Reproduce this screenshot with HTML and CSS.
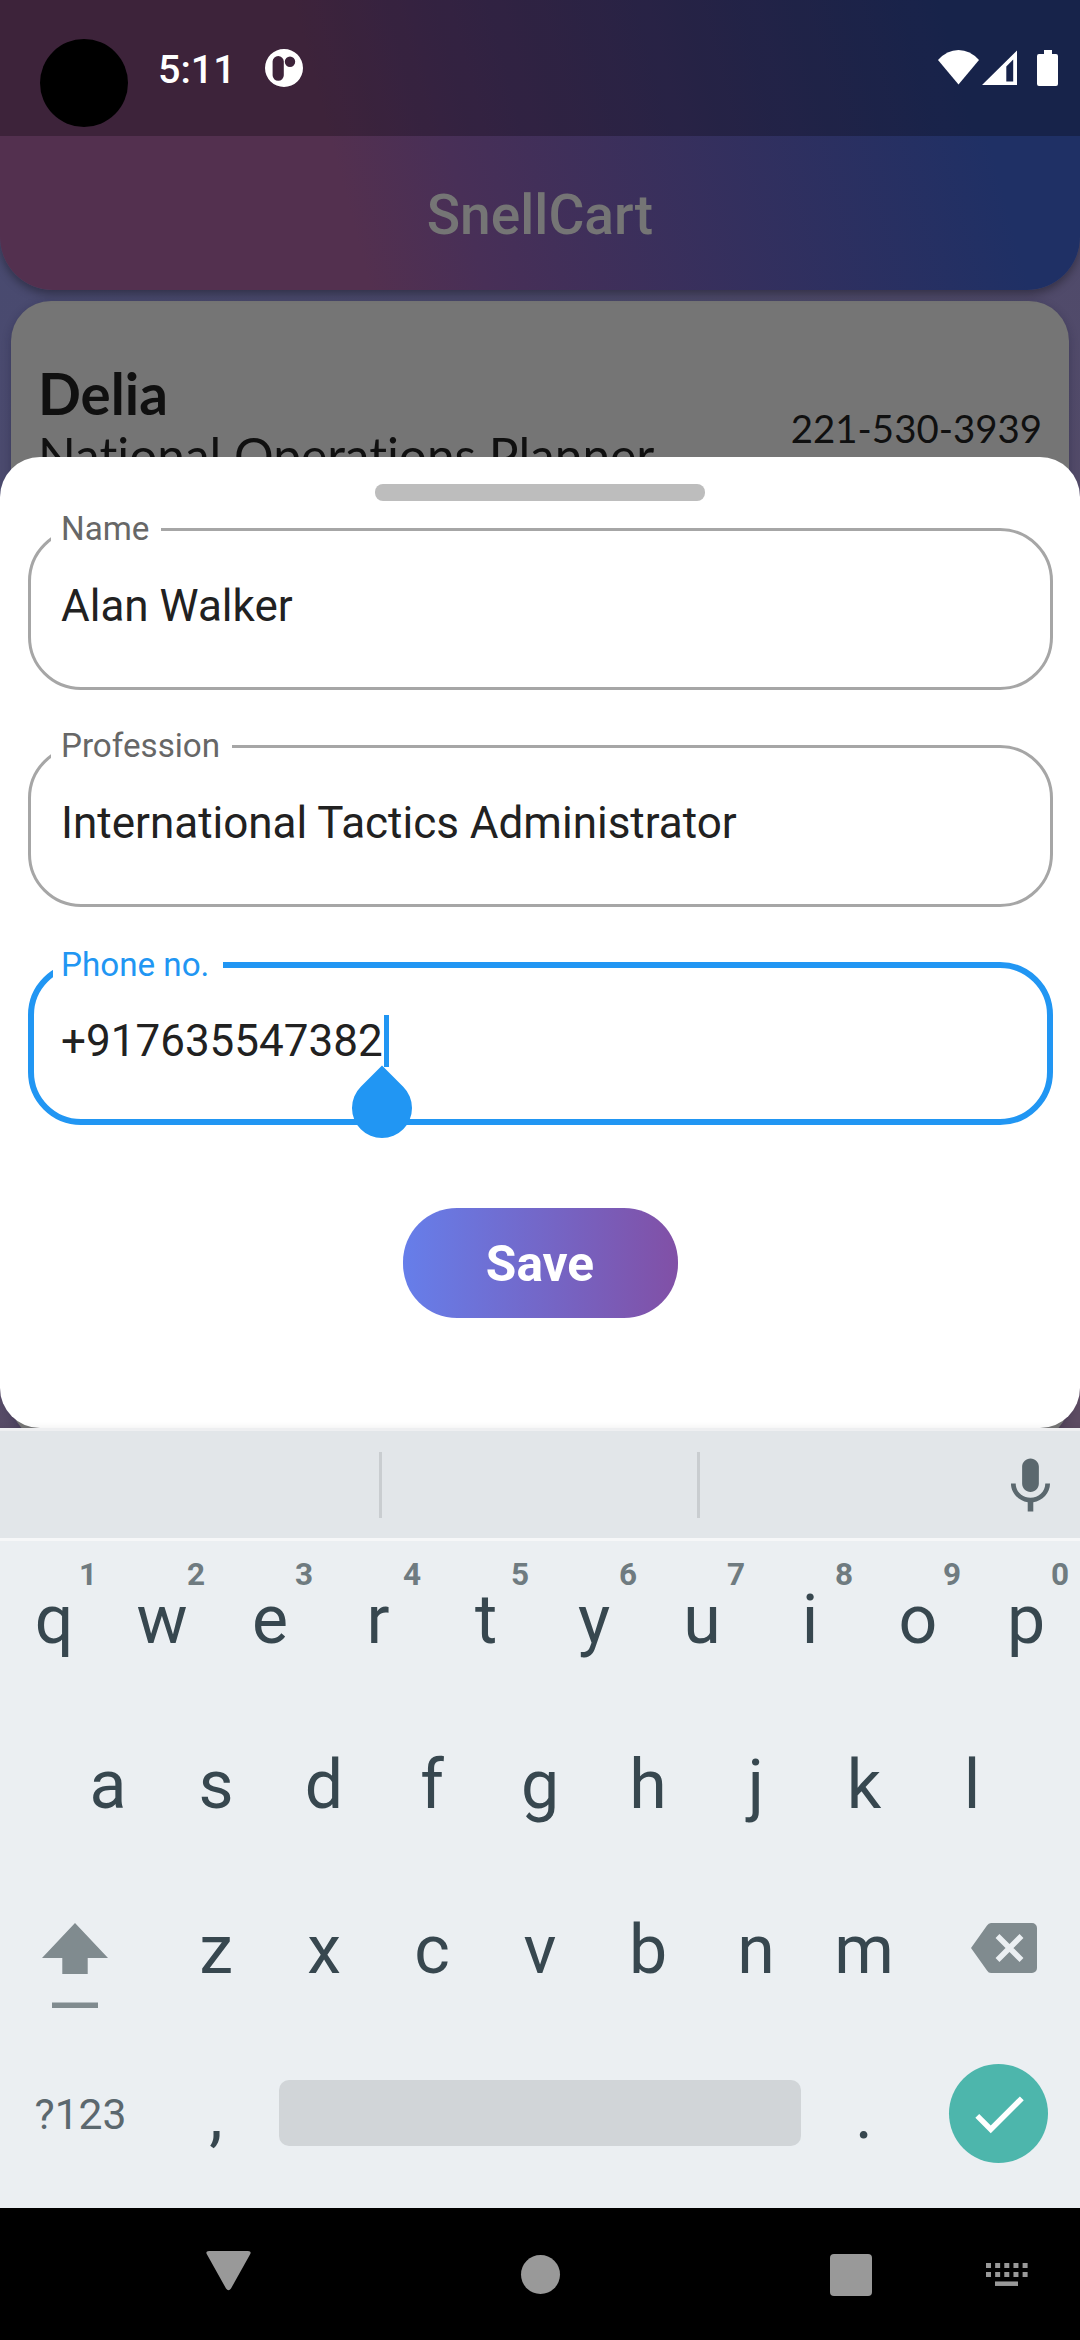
FILE: index.html
```html
<!DOCTYPE html>
<html lang="en">
<head>
<meta charset="utf-8">
<title>SnellCart</title>
<link rel="stylesheet" href="styles.css">
</head>
<body>
<div class="app">
  <header class="app-bar">
    <div class="status-bar">
      <span class="camera"></span>
      <span class="clock">5:11</span>
      <svg class="status-app" viewBox="0 0 38 38" width="38" height="38"><path fill="#fff" fill-rule="evenodd" d="M19 0a19 19 0 1 0 0 38a19 19 0 1 0 0-38zM13.2 7a5.6 5.6 0 0 1 5.6 5.6v13.6a5.6 5.6 0 0 1-11.2 0V12.600a5.600 5.600 0 0 1 5.600-5.600zM25 7.600a5.200 5.200 0 1 1 0 10.400a5.200 5.200 0 1 1 0-10.400z"/></svg>
      <svg class="status-signals" viewBox="0 0 120 36" width="120" height="36" fill="#fff">
        <path d="M0 10Q9 0 20.500 0T41 10L20.500 34.500z"/>
        <path fill-rule="evenodd" d="M44 35L79 .5V35zM68.300 31.500h6.900V9.500l-6.900 7z"/>
        <path d="M107 0h8v4h4a2 2 0 0 1 2 2v28a2 2 0 0 1-2 2h-17a2 2 0 0 1-2-2V6a2 2 0 0 1 2-2h5z" transform="translate(-1)"/>
      </svg>
    </div>
    <h1 class="app-title">SnellCart</h1>
  </header>
  <main class="contacts">
    <article class="contact">
      <div class="contact-info">
        <div class="contact-name">Delia</div>
        <div class="contact-job">National Operations Planner</div>
      </div>
      <div class="contact-phone">221-530-3939</div>
    </article>
    <article class="contact"></article>
    <article class="contact"></article>
    <article class="contact"></article>
  </main>
  <form class="sheet">
    <span class="handle"></span>
    <div class="field"><label>Name</label><span class="value">Alan Walker</span></div>
    <div class="field"><label>Profession</label><span class="value">International Tactics Administrator</span></div>
    <div class="field focused"><label>Phone no.</label><span class="value">+917635547382<i class="caret"></i><i class="drop"></i></span></div>
    <button class="save" type="button">Save</button>
  </form>
</div>
<section class="keyboard">
  <div class="suggestions">
    <span></span><span></span>
    <div class="mic"><svg viewBox="0 0 24 24" width="67" height="67" fill="#5b686e"><path d="M12 15c1.660 0 2.990-1.340 2.990-3L15 6c0-1.660-1.340-3-3-3S9 4.340 9 6v6c0 1.660 1.340 3 3 3zm5.300-3c0 3-2.540 5.100-5.300 5.100S6.700 15 6.700 12H5c0 3.420 2.720 6.230 6 6.720V22h2v-3.280c3.280-.48 6-3.300 6-6.720h-1.700z"/></svg></div>
  </div>
  <div class="keys">
    <div class="row">
      <div class="key">q<sup>1</sup></div><div class="key">w<sup>2</sup></div><div class="key">e<sup>3</sup></div><div class="key">r<sup>4</sup></div><div class="key">t<sup>5</sup></div><div class="key">y<sup>6</sup></div><div class="key">u<sup>7</sup></div><div class="key">i<sup>8</sup></div><div class="key">o<sup>9</sup></div><div class="key">p<sup>0</sup></div>
    </div>
    <div class="row">
      <div class="key">a</div><div class="key">s</div><div class="key">d</div><div class="key">f</div><div class="key">g</div><div class="key">h</div><div class="key">j</div><div class="key">k</div><div class="key">l</div>
    </div>
    <div class="row">
      <div class="key wide shift"><svg viewBox="0 0 66 86" width="66" height="86" fill="#808b8f"><path d="M33 0L66 35H45.700V51H20.300V35H0z"/><path d="M10 79.500h46v5.500H10z"/></svg></div>
      <div class="key">z</div><div class="key">x</div><div class="key">c</div><div class="key">v</div><div class="key">b</div><div class="key">n</div><div class="key">m</div>
      <div class="key wide delete"><svg viewBox="0 0 66 50" width="66" height="50"><path fill="#808b8f" d="M20 0H61a5 5 0 0 1 5 5V45a5 5 0 0 1-5 5H20q-2.500 0-4-2.500L0 25L16 2.500Q17.500 0 20 0z"/><path d="M26.500 13L50.500 37M50.500 13L26.500 37" stroke="#ebeff2" stroke-width="5.500"/></svg></div>
    </div>
    <div class="row">
      <div class="key wide symbols">?123</div>
      <div class="key">,</div>
      <div class="space"></div>
      <div class="key">.</div>
      <div class="key wide enter"><span><svg viewBox="0 0 24 24" width="66" height="66" fill="#fff"><path d="M9 16.200L4.800 12l-1.400 1.400L9 19 21 7l-1.400-1.400L9 16.200z"/></svg></span></div>
    </div>
  </div>
</section>
<nav class="nav-bar">
  <svg viewBox="0 0 45 41" width="45" height="41" fill="#999"><path d="M3 1H42Q46 1 44 4.500L25 38.500Q22.500 42 20 38.500L1 4.500Q-1 1 3 1z"/></svg>
  <span class="home"></span>
  <span class="recents"></span>
  <svg viewBox="0 0 42 24" width="42" height="24" fill="none" stroke="#999"><path stroke-width="5" stroke-dasharray="5 4.150" d="M0 3.500H42M0 12.500H42"/><path stroke-width="4.500" d="M9 21.700h23"/></svg>
</nav>
</body>
</html>
```
FILE: styles.css
```css
* { box-sizing: border-box; }
body {
  margin: 0;
  width: 1080px;
  height: 2340px;
  display: flex;
  flex-direction: column;
  overflow: hidden;
  font-family: Roboto, "Liberation Sans", sans-serif;
}
svg { display: block; flex: none; }

/* App behind the sheet */
.app {
  position: relative;
  height: 1428px;
  flex: none;
  overflow: hidden;
  background: linear-gradient(150deg, #484a70 10%, #5c4b62 95%);
}
.app-bar {
  position: relative;
  height: 290px;
  border-radius: 0 0 53px 53px;
  overflow: hidden;
  background: linear-gradient(75deg, #53304f 32%, #482f57 42%, #1f3065 89%);
  box-shadow: 0 4px 10px rgba(0, 0, 0, .35);
}
.status-bar {
  height: 136px;
  display: flex;
  align-items: flex-start;
  padding: 39px 22px 0 40px;
  background: rgba(0, 0, 0, .26);
  color: #fff;
}
.camera { width: 88px; height: 88px; border-radius: 50%; background: #000; }
.clock {
  margin: 7px 0 0 30px;
  width: 85px;
  font-size: 39.500px;
  line-height: 48px;
  font-weight: 500;
}
.status-app { margin: 10px 0 0 21.500px; }
.status-signals { margin: 11px 0 0 auto; overflow: visible; }
.app-title {
  margin: 0;
  height: 154px;
  padding-top: 4px;
  font-size: 55.100px;
  font-weight: 500;
  line-height: 150px;
  text-align: center;
  color: #757575;
}
.contacts { display: flex; flex-direction: column; gap: 22px; padding: 11px; }
.contact {
  flex: none;
  height: 268.500px;
  border-radius: 40px;
  padding: 57px 27px 0 28px;
  display: flex;
  justify-content: space-between;
  background: #757575;
  color: #101010;
  font-family: Lato, sans-serif;
  font-variant-ligatures: none;
  box-shadow: 0 3px 10px rgba(20, 20, 50, .3);
}
.contact-name { font-size: 56.500px; line-height: 70px; font-weight: 700; margin-left: -1px; }
.contact-job { font-size: 49.600px; line-height: 54px; margin-left: -1px; }
.contact-phone { font-size: 38.400px; line-height: 46px; padding-top: 47px; }

/* Bottom sheet */
.sheet {
  position: absolute;
  inset: 456.500px 0 0 0;
  display: flex;
  flex-direction: column;
  padding: 27.500px 27.500px 0;
  border-radius: 40px;
  background: #fff;
}
.handle { align-self: center; width: 330px; height: 16.500px; border-radius: 8px; background: #bdbdbd; }
.field {
  position: relative;
  height: 162px;
  margin-top: 55px;
  border: 3px solid #a6a6a6;
  border-radius: 53px;
  padding: 49px 30.500px 0;
}
.handle + .field { margin-top: 27.500px; }
.field label {
  position: absolute;
  left: 20.500px;
  top: -14px;
  padding: 0 12px 0 10px;
  font-size: 33.200px;
  line-height: 24px;
  background: #fff;
  color: #676767;
}
.value { position: relative; display: inline-block; font-size: 44px; line-height: 52px; color: #212121; }
.focused { border: 6px solid #2196f3; height: 163px; padding: 47px 27.500px 0; }
.focused label { left: 19.500px; top: -15px; padding: 0 14px 0 8px; color: #2196f3; }
.caret { position: absolute; right: -6px; top: 0; width: 5px; height: 52px; background: #2196f3; }
.drop {
  position: absolute;
  right: -29.500px;
  top: 63px;
  width: 60px;
  height: 60px;
  border-radius: 0 50% 50% 50%;
  transform: rotate(45deg);
  background: #2196f3;
}
.save {
  align-self: center;
  margin-top: 83px;
  width: 275px;
  height: 110px;
  padding: 2px 0 0;
  border: 0;
  border-radius: 54px;
  background: linear-gradient(90deg, #667eea, #8150a6);
  color: #fff;
  font: 700 49.600px Roboto, sans-serif;
}

/* Keyboard */
.keyboard {
  position: relative;
  height: 780px;
  flex: none;
  background: #ebeff2;
  box-shadow: 0 0 7px rgba(0, 0, 0, .08);
}
.suggestions {
  height: 113px;
  display: flex;
  align-items: center;
  border-top: 3px solid #eeeff1;
  border-bottom: 3px solid #f6f7f8;
  background: #e2e6e9;
}
.suggestions span { width: 318px; height: 66px; border-right: 3px solid #c9cdd0; }
.suggestions span:first-child { width: 382px; }
.mic { margin: 0 16px 3px auto; }
.row { display: flex; justify-content: center; height: 165px; padding-bottom: 11px; }
.key {
  position: relative;
  width: 108px;
  padding-top: 4px;
  font-size: 68px;
  line-height: 151px;
  text-align: center;
  color: #37474f;
}
.key sup {
  position: absolute;
  top: 18px;
  right: 11px;
  font-size: 31.500px;
  line-height: 32px;
  font-weight: 700;
  color: #6f7b80;
}
.wide { width: 162px; }
.shift { padding: 52px 0 0 42px; }
.delete { padding: 52px 0 0 53px; }
.symbols { padding: 3px 1px 0 0; font-size: 42.600px; color: #5b686e; }
.space { width: 522px; height: 66px; margin: 44px 9px 0; border-radius: 10px; background: #d1d5d8; }
.enter { padding: 28px 0 0 31px; }
.enter span {
  width: 99px;
  height: 99px;
  border-radius: 50%;
  display: grid;
  place-items: center;
  background: #4db6ac;
}

/* System navigation */
.nav-bar {
  position: relative;
  flex: 1;
  display: flex;
  align-items: flex-start;
  padding: 42px 52px 0 206px;
  background: #000;
}
.home { width: 39px; height: 39px; margin: 5px 0 0 270px; border-radius: 50%; background: #999; }
.recents { width: 41.500px; height: 41.500px; margin: 4px auto 0 270px; border-radius: 4px; background: #999; }
.nav-bar svg:last-child { margin-top: 12px; }
```
